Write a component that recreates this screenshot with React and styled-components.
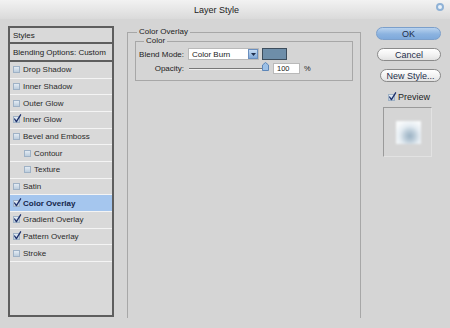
import React from "react";
import styled, { createGlobalStyle } from "styled-components";

const Global = createGlobalStyle`
  html, body { margin: 0; padding: 0; background: #d5d5d5; }
  body { font-family: "Liberation Sans", Arial, sans-serif; color: #1e1e1e; }
  * { box-sizing: border-box; }
`;

const Window = styled.div`
  width: 450px;
  height: 328px;
  background: #d5d5d5;
  overflow: hidden;
  display: flex;
  flex-direction: column;
`;

const TitleBar = styled.div`
  height: 19px;
  flex: none;
  display: flex;
  align-items: center;
  background: linear-gradient(#f2f2f2, #e4e4e4 60%, #dadada);
`;

const Title = styled.div`
  margin-left: 194px;
  font-size: 9px;
  color: #222;
`;

const Close = styled.div`
  margin-left: auto;
  margin-right: 6px;
  margin-top: -5px;
  width: 8px;
  height: 8px;
  border-radius: 50%;
  border: 2px solid #8fb2d6;
  background: #eaf2fa;
`;

const Main = styled.div`
  flex: 1;
  display: flex;
  align-items: flex-start;
  padding: 7px 0 0 8px;
`;

const StylesPanel = styled.div`
  width: 106px;
  height: 291px;
  flex: none;
  border: 2px solid #5e5e5e;
  background: #d9d9d9;
  font-size: 8px;
`;

const HeaderRow = styled.div`
  height: ${(p) => p.$h}px;
  border-bottom: 2px solid #5e5e5e;
  display: flex;
  align-items: center;
  padding-left: 3px;
  color: #222;
`;

const Row = styled.div`
  height: 16.67px;
  border-bottom: 1px solid #f4f4f4;
  display: flex;
  align-items: center;
  gap: 3px;
  padding-left: ${(p) => (p.$indent ? 14 : 3)}px;
  background: ${(p) => (p.$active ? "#a5c6ee" : "transparent")};
  font-weight: ${(p) => (p.$active ? 700 : 400)};
  color: ${(p) => (p.$active ? "#14254a" : "#2a2a2a")};
`;

const Box = styled.span`
  position: relative;
  width: 7px;
  height: 7px;
  flex: none;
  border: 1px solid #9fb2c6;
  background: linear-gradient(#e3ebf3, #bccddd);
`;

const CheckMark = styled.svg`
  position: absolute;
  left: 0px;
  top: -3px;
  overflow: visible;
`;

function Check({ on }) {
  return (
    <Box>
      {on && (
        <CheckMark width="7" height="9" viewBox="0 0 7 9">
          <path d="M0.6 5 L2.4 7.6 L6.6 0.8" fill="none" stroke="#1c2f6b" strokeWidth="1.3" strokeLinecap="round" strokeLinejoin="round" />
        </CheckMark>
      )}
    </Box>
  );
}

const Middle = styled.fieldset`
  margin: 1px 0 0 13px;
  padding: 0;
  width: 234px;
  height: 291px;
  flex: none;
  border: 1px solid #a7a7a7;
  border-bottom: none;
  min-width: 0;
`;

const Legend = styled.legend`
  margin-left: ${(p) => p.$ml}px;
  padding: 0 2px;
  font-size: 8px;
  line-height: 10px;
  color: #222;
`;

const Inner = styled.fieldset`
  margin: -1px 7px 0 7px;
  padding: 2px 0 6px 0;
  border: 1px solid #a7a7a7;
  min-width: 0;
`;

const FormGrid = styled.div`
  display: grid;
  grid-template-columns: 48px auto;
  column-gap: 4px;
  row-gap: 3px;
  align-items: center;
  font-size: 8px;
`;

const Label = styled.div`
  text-align: right;
  color: #222;
`;

const Line = styled.div`
  display: flex;
  align-items: center;
`;

const Select = styled.div`
  width: 71px;
  height: 12px;
  background: #fff;
  border: 1px solid #b9b9b9;
  display: flex;
  align-items: center;
  justify-content: space-between;
  padding-left: 3px;
  color: #222;
`;

const DropBtn = styled.span`
  width: 10px;
  height: 10px;
  background: linear-gradient(#c6dcf4, #7fa7d6);
  border: 1px solid #6a8fbf;
  display: flex;
  align-items: center;
  justify-content: center;
`;

const Swatch = styled.div`
  margin-left: 3px;
  width: 25px;
  height: 12px;
  background: #6e8ea9;
  border: 1px solid #3d4d5c;
`;

const Slider = styled.div`
  position: relative;
  margin-left: 1px;
  width: 78px;
  height: 10px;
  display: flex;
  align-items: center;
`;

const Track = styled.div`
  width: 100%;
  height: 2px;
  background: #777;
  border-bottom: 1px solid #f0f0f0;
`;

const Thumb = styled.svg`
  position: absolute;
  right: -2px;
  top: -2px;
`;

const NumInput = styled.div`
  margin-left: 6px;
  width: 27px;
  height: 11px;
  background: #fff;
  border: 1px solid #b9b9b9;
  padding-left: 3px;
  font-size: 7.5px;
  line-height: 9px;
  color: #222;
`;

const Percent = styled.span`
  margin-left: 4px;
  font-size: 7.5px;
`;

const RightCol = styled.div`
  width: 89px;
  flex: none;
  display: flex;
  flex-direction: column;
  align-items: flex-end;
  padding: 1px 9px 0 0;
`;

const Button = styled.div`
  width: ${(p) => p.$w}px;
  height: 13px;
  margin-bottom: 8px;
  border-radius: 7px;
  border: 1px solid ${(p) => (p.$primary ? "#7b9fcb" : "#8a8a8a")};
  background: ${(p) =>
    p.$primary ? "linear-gradient(#b9d3ef, #8cb3e0 55%, #7ea9db)" : "linear-gradient(#ffffff, #f0f0f0 60%, #e2e2e2)"};
  display: flex;
  align-items: center;
  justify-content: center;
  font-size: 9px;
  color: #1e2e4a;
`;

const PreviewRow = styled.div`
  margin-top: 2px;
  margin-right: 11px;
  display: flex;
  align-items: center;
  gap: 3px;
  font-size: 9px;
`;

const PreviewBox = styled.div`
  margin-top: 5px;
  margin-right: 9px;
  width: 49px;
  height: 50px;
  border-top: 1px solid #9a9a9a;
  border-left: 1px solid #9a9a9a;
  border-right: 1px solid #e2e2e2;
  border-bottom: 1px solid #e2e2e2;
  display: flex;
  align-items: flex-start;
  justify-content: center;
  padding-top: 13px;
  padding-left: 1px;
`;

const Thumbnail = styled.div`
  width: 25px;
  height: 23px;
  background:
    radial-gradient(circle at 55% 65%, #9ab1c3 0, #b9cad7 24%, rgba(228, 236, 242, 0.95) 50%, rgba(248, 250, 251, 1) 78%),
    #f6f7f9;
  filter: blur(0.8px);
`;

const items = [
  { t: "Drop Shadow" },
  { t: "Inner Shadow" },
  { t: "Outer Glow" },
  { t: "Inner Glow", on: true },
  { t: "Bevel and Emboss" },
  { t: "Contour", indent: true },
  { t: "Texture", indent: true },
  { t: "Satin" },
  { t: "Color Overlay", on: true, active: true },
  { t: "Gradient Overlay", on: true },
  { t: "Pattern Overlay", on: true },
  { t: "Stroke" },
];

export default function App() {
  return (
    <Window>
      <Global />
      <TitleBar>
        <Title>Layer Style</Title>
        <Close />
      </TitleBar>
      <Main>
        <StylesPanel>
          <HeaderRow $h={16}>Styles</HeaderRow>
          <HeaderRow $h={18}>Blending Options: Custom</HeaderRow>
          {items.map((it) => (
            <Row key={it.t} $indent={it.indent} $active={it.active}>
              <Check on={it.on} />
              {it.t}
            </Row>
          ))}
        </StylesPanel>
        <Middle>
          <Legend $ml={9}>Color Overlay</Legend>
          <Inner>
            <Legend $ml={8}>Color</Legend>
            <FormGrid>
              <Label>Blend Mode:</Label>
              <Line>
                <Select>
                  Color Burn
                  <DropBtn>
                    <svg width="5" height="3" viewBox="0 0 5 3">
                      <path d="M0 0 H5 L2.5 3 Z" fill="#1d2c4c" />
                    </svg>
                  </DropBtn>
                </Select>
                <Swatch />
              </Line>
              <Label>Opacity:</Label>
              <Line>
                <Slider>
                  <Track />
                  <Thumb width="7" height="9" viewBox="0 0 7 9">
                    <path d="M0.5 3 L3.5 0.5 L6.5 3 V8.5 H0.5 Z" fill="#9cc0e6" stroke="#5d86b8" strokeWidth="1" />
                  </Thumb>
                </Slider>
                <NumInput>100</NumInput>
                <Percent>%</Percent>
              </Line>
            </FormGrid>
          </Inner>
        </Middle>
        <RightCol>
          <Button $primary $w={65}>OK</Button>
          <Button $w={64}>Cancel</Button>
          <Button $w={61}>New Style...</Button>
          <PreviewRow>
            <Check on />
            Preview
          </PreviewRow>
          <PreviewBox>
            <Thumbnail />
          </PreviewBox>
        </RightCol>
      </Main>
    </Window>
  );
}
